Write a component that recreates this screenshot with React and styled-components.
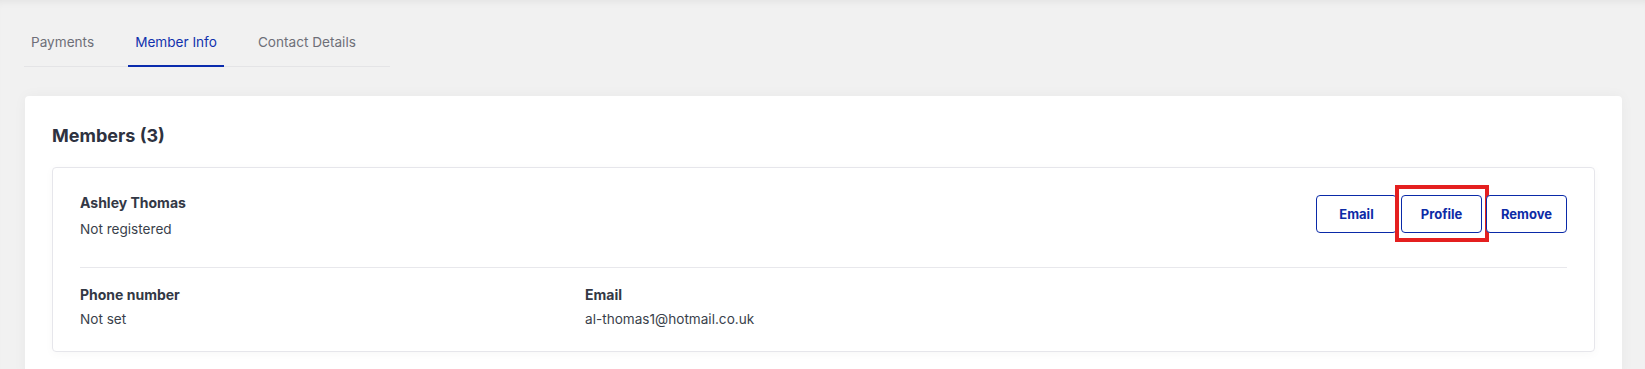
import styled, { createGlobalStyle } from "styled-components";

const GlobalStyle = createGlobalStyle`
  html, body {
    margin: 0;
    padding: 0;
    background: #f1f1f1;
  }
  body {
    font-family: Inter, "Noto Sans", "Liberation Sans", sans-serif;
    color: #333845;
  }
`;

const Page = styled.div`
  min-height: 100vh;
  padding: 20px 23px 0 25px;
  box-sizing: border-box;
  background: #f1f1f1;
  box-shadow: inset 0 7px 8px -6px rgba(0, 0, 0, 0.07);
`;

const TabList = styled.div`
  display: inline-flex;
  border-bottom: 1px solid #e4e4e6;
  margin-left: -1px;
`;

const Tab = styled.div`
  padding: 12px 7px 13px;
  margin-right: 27px;
  margin-bottom: -1px;
  font-size: 13.6px;
  line-height: 20px;
  color: ${(p) => (p.active ? "#1131ad" : "#6e6f78")};
  border-bottom: 2px solid ${(p) => (p.active ? "#0a2bad" : "transparent")};
  cursor: pointer;
`;

const Card = styled.div`
  margin-top: 29px;
  background: #fff;
  border-radius: 4px;
  padding: 26px 27px 27px;
  box-shadow: 0 0 14px rgba(0, 0, 0, 0.04);
`;

const Title = styled.h2`
  margin: 0 0 17px;
  font-size: 18px;
  line-height: 28px;
  font-weight: 700;
  color: #2e3240;
`;

const MemberCard = styled.div`
  border: 1px solid #e6e6eb;
  border-radius: 4px;
  padding: 25px 27px 22px;
  box-shadow: 0 2px 10px rgba(0, 0, 0, 0.03);
`;

const MemberHeader = styled.div`
  display: flex;
  justify-content: space-between;
  align-items: flex-start;
  padding-bottom: 28px;
  border-bottom: 1px solid #e8e8ec;
`;

const NameBlock = styled.div`
  display: flex;
  flex-direction: column;
  gap: 6px;
`;

const Label = styled.div`
  font-size: 14px;
  line-height: 20px;
  font-weight: 700;
  color: #333845;
`;

const Value = styled.div`
  font-size: 13.6px;
  line-height: 20px;
  color: #3a3f4b;
`;

const Actions = styled.div`
  display: flex;
  gap: 4px;
  margin-top: 2px;
`;

const Button = styled.button`
  position: relative;
  width: 81px;
  height: 38px;
  background: #fff;
  border: 1px solid #0a2aa8;
  border-radius: 4px;
  color: #0d2ba6;
  font-family: inherit;
  font-size: 13px;
  font-weight: 700;
  cursor: pointer;
`;

const Highlight = styled.span`
  position: absolute;
  top: -11px;
  bottom: -10px;
  left: -7px;
  right: -8px;
  border: 4px solid #e41f1f;
  pointer-events: none;
`;

const Details = styled.div`
  display: grid;
  grid-template-columns: repeat(3, 1fr);
  gap: 28px;
  padding-top: 17px;
`;

const Field = styled.div`
  display: flex;
  flex-direction: column;
  gap: 4px;
`;

const tabs = ["Payments", "Member Info", "Contact Details"];

const App = () => {
  return (
    <>
      <GlobalStyle />
      <Page>
        <TabList>
          {tabs.map((t) => (
            <Tab key={t} active={t === "Member Info"}>
              {t}
            </Tab>
          ))}
        </TabList>
        <Card>
          <Title>Members (3)</Title>
          <MemberCard>
            <MemberHeader>
              <NameBlock>
                <Label>Ashley Thomas</Label>
                <Value>Not registered</Value>
              </NameBlock>
              <Actions>
                <Button>Email</Button>
                <Button>
                  Profile
                  <Highlight />
                </Button>
                <Button>Remove</Button>
              </Actions>
            </MemberHeader>
            <Details>
              <Field>
                <Label>Phone number</Label>
                <Value>Not set</Value>
              </Field>
              <Field>
                <Label>Email</Label>
                <Value>al-thomas1@hotmail.co.uk</Value>
              </Field>
            </Details>
          </MemberCard>
        </Card>
      </Page>
    </>
  );
};

export default App;
